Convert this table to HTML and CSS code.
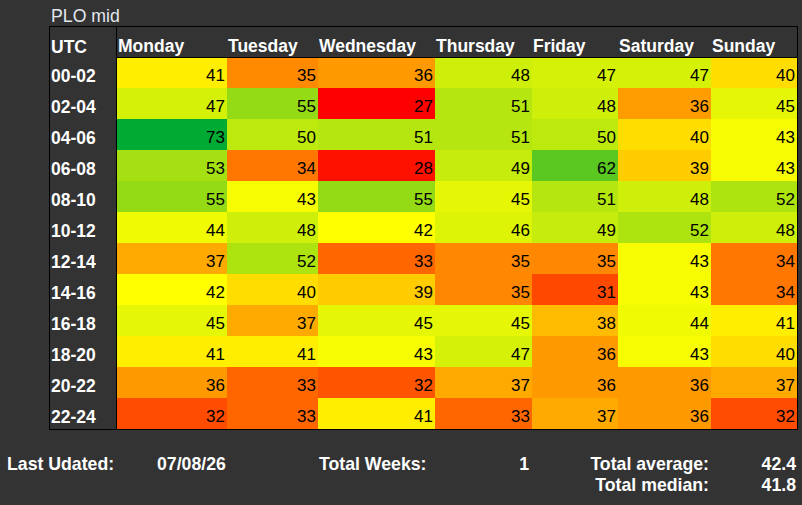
FILE: index.html
```html
<!DOCTYPE html>
<html>
<head>
<meta charset="utf-8">
<link rel="stylesheet" href="styles.css">
</head>
<body>
<div class="title">PLO mid</div>
<div class="heat">
  <div class="hd lab">UTC</div>
  <div class="hd day">Monday</div>
  <div class="hd day">Tuesday</div>
  <div class="hd day">Wednesday</div>
  <div class="hd day">Thursday</div>
  <div class="hd day">Friday</div>
  <div class="hd day">Saturday</div>
  <div class="hd day">Sunday</div>

  <div class="lab">00-02</div>
  <div class="v" style="background:#FFEE00">41</div>
  <div class="v" style="background:#FF8A00">35</div>
  <div class="v" style="background:#FF9900">36</div>
  <div class="v" style="background:#CEEF0A">48</div>
  <div class="v" style="background:#D6F108">47</div>
  <div class="v" style="background:#D6F108">47</div>
  <div class="v" style="background:#FFDD00">40</div>

  <div class="lab">02-04</div>
  <div class="v" style="background:#D6F108">47</div>
  <div class="v" style="background:#94DB15">55</div>
  <div class="v" style="background:#FF0000">27</div>
  <div class="v" style="background:#B5E60F">51</div>
  <div class="v" style="background:#CEEF0A">48</div>
  <div class="v" style="background:#FF9C00">36</div>
  <div class="v" style="background:#E6F705">45</div>

  <div class="lab">04-06</div>
  <div class="v" style="background:#00AA33">73</div>
  <div class="v" style="background:#BDE90D">50</div>
  <div class="v" style="background:#B5E60F">51</div>
  <div class="v" style="background:#B5E60F">51</div>
  <div class="v" style="background:#BDE90D">50</div>
  <div class="v" style="background:#FFDD00">40</div>
  <div class="v" style="background:#F7FC02">43</div>

  <div class="lab">06-08</div>
  <div class="v" style="background:#A5E112">53</div>
  <div class="v" style="background:#FF7700">34</div>
  <div class="v" style="background:#FF1100">28</div>
  <div class="v" style="background:#C5EC0C">49</div>
  <div class="v" style="background:#5AC821">62</div>
  <div class="v" style="background:#FFCC00">39</div>
  <div class="v" style="background:#F7FC02">43</div>

  <div class="lab">08-10</div>
  <div class="v" style="background:#94DB15">55</div>
  <div class="v" style="background:#F7FC02">43</div>
  <div class="v" style="background:#94DB15">55</div>
  <div class="v" style="background:#E6F705">45</div>
  <div class="v" style="background:#B5E60F">51</div>
  <div class="v" style="background:#CEEF0A">48</div>
  <div class="v" style="background:#ADE410">52</div>

  <div class="lab">10-12</div>
  <div class="v" style="background:#EFFA03">44</div>
  <div class="v" style="background:#CEEF0A">48</div>
  <div class="v" style="background:#FFFF00">42</div>
  <div class="v" style="background:#DEF407">46</div>
  <div class="v" style="background:#C5EC0C">49</div>
  <div class="v" style="background:#ADE410">52</div>
  <div class="v" style="background:#CEEF0A">48</div>

  <div class="lab">12-14</div>
  <div class="v" style="background:#FFAA00">37</div>
  <div class="v" style="background:#ADE410">52</div>
  <div class="v" style="background:#FF6600">33</div>
  <div class="v" style="background:#FF8800">35</div>
  <div class="v" style="background:#FF8800">35</div>
  <div class="v" style="background:#F7FC02">43</div>
  <div class="v" style="background:#FF7700">34</div>

  <div class="lab">14-16</div>
  <div class="v" style="background:#FFFF00">42</div>
  <div class="v" style="background:#FFDD00">40</div>
  <div class="v" style="background:#FFCC00">39</div>
  <div class="v" style="background:#FF8800">35</div>
  <div class="v" style="background:#FF4800">31</div>
  <div class="v" style="background:#F7FC02">43</div>
  <div class="v" style="background:#FF7700">34</div>

  <div class="lab">16-18</div>
  <div class="v" style="background:#E6F705">45</div>
  <div class="v" style="background:#FFAA00">37</div>
  <div class="v" style="background:#E6F705">45</div>
  <div class="v" style="background:#E6F705">45</div>
  <div class="v" style="background:#FFBB00">38</div>
  <div class="v" style="background:#EFFA03">44</div>
  <div class="v" style="background:#FFEE00">41</div>

  <div class="lab">18-20</div>
  <div class="v" style="background:#FFEE00">41</div>
  <div class="v" style="background:#FFEE00">41</div>
  <div class="v" style="background:#F7FC02">43</div>
  <div class="v" style="background:#D6F108">47</div>
  <div class="v" style="background:#FF9900">36</div>
  <div class="v" style="background:#F7FC02">43</div>
  <div class="v" style="background:#FFDD00">40</div>

  <div class="lab">20-22</div>
  <div class="v" style="background:#FF9900">36</div>
  <div class="v" style="background:#FF6600">33</div>
  <div class="v" style="background:#FF5500">32</div>
  <div class="v" style="background:#FFAA00">37</div>
  <div class="v" style="background:#FF9900">36</div>
  <div class="v" style="background:#FF9900">36</div>
  <div class="v" style="background:#FFAA00">37</div>

  <div class="lab">22-24</div>
  <div class="v" style="background:#FF4C00">32</div>
  <div class="v" style="background:#FF6600">33</div>
  <div class="v" style="background:#FFEE00">41</div>
  <div class="v" style="background:#FF6600">33</div>
  <div class="v" style="background:#FFAA00">37</div>
  <div class="v" style="background:#FF9900">36</div>
  <div class="v" style="background:#FF4C00">32</div>
</div>

<div class="footer">
  <div class="f-lab">Last Udated:</div>
  <div class="f-date">07/08/26</div>
  <div class="f-lab">Total Weeks:</div>
  <div class="f-num">1</div>
  <div class="f-rlab">Total average:</div>
  <div class="f-num">42.4</div>
  <div></div><div></div><div></div><div></div>
  <div class="f-rlab">Total median:</div>
  <div class="f-num">41.8</div>
</div>
</body>
</html>
```

FILE: styles.css
```css
html, body {
  margin: 0;
  padding: 0;
  background: #333333;
}

body {
  font-family: "Liberation Sans", Arial, sans-serif;
  width: 802px;
  height: 505px;
  overflow: hidden;
}

.title {
  padding: 6px 0 0 51px;
  height: 20px;
  line-height: 20px;
  font-size: 17.7px;
  color: #e2e8f0;
}

.heat {
  margin-left: 49px;
  width: 747px;
  border: 1px solid #000;
  display: grid;
  grid-template-columns: 67px 110px 91px 117px 97px 86px 93px 86px;
  grid-template-rows: 31px 30px repeat(11, 31px);
}

.heat > div {
  box-sizing: border-box;
  display: flex;
  align-items: flex-end;
  line-height: normal;
}

.hd {
  color: #fff;
  font-weight: bold;
  font-size: 17.5px;
  padding-left: 1px;
}

.day {
  border-bottom: 1px solid #000;
}

.lab {
  color: #fff;
  font-weight: bold;
  font-size: 17.5px;
  padding-left: 1px;
  padding-bottom: 1px;
  border-right: 1px solid #000;
}

.hd.lab {
  padding-bottom: 0;
}

.v {
  justify-content: flex-end;
  color: #000;
  font-size: 17px;
  padding-right: 2px;
  padding-bottom: 2px;
}

.footer {
  margin-top: 24px;
  padding-left: 7px;
  display: grid;
  grid-template-columns: 150px 162px 130px 80px 180px 87px;
  grid-auto-rows: 21px;
  line-height: 21px;
  color: #fff;
  font-weight: bold;
  font-size: 17.7px;
}

.f-num,
.f-rlab {
  text-align: right;
}
```
